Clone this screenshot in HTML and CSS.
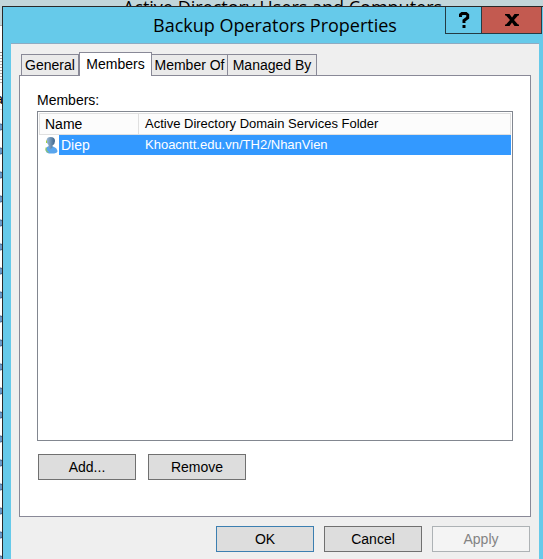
FILE: index.html
```html
<!DOCTYPE html>
<html lang="en">
<head>
<meta charset="utf-8">
<title>Backup Operators Properties</title>
<link rel="stylesheet" href="styles.css">
</head>
<body>
<div class="backdrop">
  <div class="backdrop-title">Active Directory Users and Computers</div>
  <div class="backdrop-menu"></div>
  <div class="backdrop-tools"></div>
  <div class="backdrop-head">a</div>
  <div class="backdrop-items">
    <i></i><i></i><i></i><i></i><i></i><i></i><i></i><i></i><i></i>
    <i></i><i></i><i></i><i></i><i></i><i></i><i></i><i></i><i></i><i></i>
  </div>
</div>
<main class="dialog">
  <header class="titlebar">
    <h1>Backup Operators Properties</h1>
    <div class="window-buttons">
      <button class="help" type="button" aria-label="Help">
        <svg width="12" height="16" viewBox="0 0 12 16"><path d="M2.500 5V2.800L4 1.500h4l1.700 1.500v2.700L6 8.500V11" fill="none" stroke="#000" stroke-width="3"/><path d="M4.500 13h3v3h-3z"/></svg>
      </button>
      <button class="close" type="button" aria-label="Close">
        <svg width="14" height="12" viewBox="0 0 14 12"><path d="M0 0h4.500L7 3.500 9.500 0H14v1.500h-1L9 6l4 4.500h1V12H9.500L7 8.500 4.500 12H0v-1.500h1L5 6 1 1.500H0z"/></svg>
      </button>
    </div>
  </header>
  <div class="content">
    <div class="tabs" role="tablist">
      <button class="tab tab-general" type="button" role="tab">General</button>
      <button class="tab tab-members active" type="button" role="tab" aria-selected="true">Members</button>
      <button class="tab tab-memberof" type="button" role="tab">Member Of</button>
      <button class="tab tab-managed" type="button" role="tab">Managed By</button>
    </div>
    <section class="page" role="tabpanel">
      <h2 id="members-label">Members:</h2>
      <div class="list">
        <table aria-labelledby="members-label">
          <thead>
            <tr><th class="name-col">Name</th><th class="folder-col">Active Directory Domain Services Folder</th></tr>
          </thead>
          <tbody>
            <tr>
              <td><div class="member">
                <svg class="user" width="20" height="20" viewBox="0 0 20 20">
                  <defs><linearGradient id="head" x2="1"><stop stop-color="#9dbcd6"/><stop offset="1" stop-color="#3c648c"/></linearGradient></defs>
                  <path d="M6.500 15Q6.500 12 10 11l4 .500q4.500 1.500 4.500 5-.3 1.500-3.300 2H10q-3-.500-3.500-3.500z" fill="#59a5ed"/>
                  <path d="M7.500 5Q8 2 11.500 2q4.500 0 4.500 4 0 3-2.500 4.500v2L11 14.500 9.500 12V10Q7.500 8 7.500 5z" fill="url(#head)"/>
                  <path d="M7.500 5.500V8M7 12.500v3L9.500 17.500" fill="none" stroke="#a5d33b"/>
                </svg><span>Diep</span></div></td>
              <td class="folder">Khoacntt.edu.vn/TH2/NhanVien</td>
            </tr>
          </tbody>
        </table>
      </div>
      <div class="list-actions">
        <button class="button" type="button">Add...</button>
        <button class="button" type="button">Remove</button>
      </div>
    </section>
    <footer class="actions">
      <button class="button primary" type="button">OK</button>
      <button class="button" type="button">Cancel</button>
      <button class="button" type="button" disabled>Apply</button>
    </footer>
  </div>
</main>
</body>
</html>
```
FILE: styles.css
```css
* { box-sizing: border-box; }
body {
  margin: 0;
  min-height: 100vh;
  padding: 6px 0 0 2px;
  display: flex;
  overflow: hidden;
  background: #fff;
  color: #000;
  font: 14px/20px "Liberation Sans", Arial, sans-serif;
}
button { font: inherit; color: inherit; border-radius: 0; }

/* The console window that shows behind the dialog */
.backdrop { position: absolute; inset: 0; overflow: hidden; }
.backdrop-title {
  height: 25px;
  padding-left: 22px;
  background: #c2d6da;
  font: 18px/14px "Open Sans", sans-serif;
  text-align: center;
}
.backdrop-menu { height: 27px; border-top: 1px solid #aaa; }
.backdrop-tools {
  height: 31px;
  border-top: 1px solid #888;
  border-bottom: 1px solid #aaa;
  background: repeating-linear-gradient(#fff 0 2px, #aaa 2px 3px);
}
.backdrop-head { height: 27px; width: 3px; direction: rtl; line-height: 32px; border-bottom: 1px solid #ddd; }
.backdrop-items { padding-top: 5px; }
.backdrop-items i {
  display: block;
  width: 4px;
  height: 24px;
  background: radial-gradient(circle at 0 12px, #6f9dcc 0 2px, #456b91 3px, transparent 4px);
}

.dialog {
  position: relative;
  flex: 1;
  min-width: 0;
  display: flex;
  flex-direction: column;
  padding: 0 4px 0 8px;
  border: solid #292929;
  border-width: 1px 0 0 1px;
  background: #66caea;
}
.titlebar { display: flex; height: 36px; margin-right: -3px; }
.titlebar h1 {
  flex: 1;
  margin: 0;
  padding-left: 94px;
  font: 18px/36px "Open Sans", sans-serif;
  text-align: center;
  white-space: nowrap;
}
.window-buttons { display: flex; height: 27px; }
.window-buttons button {
  display: flex;
  align-items: center;
  justify-content: center;
  padding: 0;
  border: 1px solid #243b44;
  border-top: 0;
}
.help { width: 37px; background: #66caea; }
.window-buttons .close { width: 60px; border-left: 0; background: #c35a50; }

.content {
  flex: 1;
  display: flex;
  flex-direction: column;
  padding: 8px 8px 7px;
  border-top: 1px solid #8eabc2;
  background: #efefef;
}
.tabs { display: flex; align-items: flex-end; padding-left: 2px; }
.tab {
  height: 21px;
  padding: 0;
  border: 1px solid #898997;
  border-left: 0;
  border-bottom: 0;
  background: #eaeaea;
}
.tab-general { width: 58px; border-left: 1px solid #898997; }
.tab-members { width: 73px; }
.tab-memberof { width: 76px; }
.tab-managed { width: 89px; }
.tab.active {
  position: relative;
  height: 24px;
  margin-bottom: -1px;
  padding-bottom: 2px;
  border-left: 1px solid #898997;
  background: #fff;
}
.page {
  flex: 1;
  display: flex;
  flex-direction: column;
  padding: 14px 17px 36px;
  border: 1px solid #898997;
  background: #fff;
}
.page h2 { margin: 0 0 1px; font-size: 14px; font-weight: 400; line-height: 20px; }
.list { flex: 1; padding: 1px; border: 1px solid #828790; }
.list table { width: 100%; table-layout: fixed; border-collapse: separate; border-spacing: 0; }
.list th {
  height: 22px;
  padding: 0 6px;
  border: 1px solid #e0e0e0;
  border-left: 0;
  background: #fcfcfc;
  font-weight: 400;
  text-align: left;
}
.list .name-col { width: 100px; border-left: 1px solid #e0e0e0; padding-left: 5px; }
.list td { padding: 0; height: 20px; color: #fff; }
.member { display: flex; }
.member svg { display: block; }
.member span { flex: 1; padding-left: 2px; background: #3399ff; }
.list .folder { padding-left: 6px; background: #3399ff; }
.list .folder, .list .folder-col { font-size: 13px; }
.list-actions { display: flex; gap: 12px; padding: 13px 0 0 1px; }
.actions { display: flex; justify-content: flex-end; gap: 10px; padding: 9px 1px 0 0; }
.button {
  width: 98px;
  height: 26px;
  padding: 0;
  border: 1px solid #707070;
  background: #ddd;
}
.button.primary { border-color: #3c7fb1; }
.button:disabled { border-color: #adb2b5; background: #f4f4f4; color: #838383; }
```
